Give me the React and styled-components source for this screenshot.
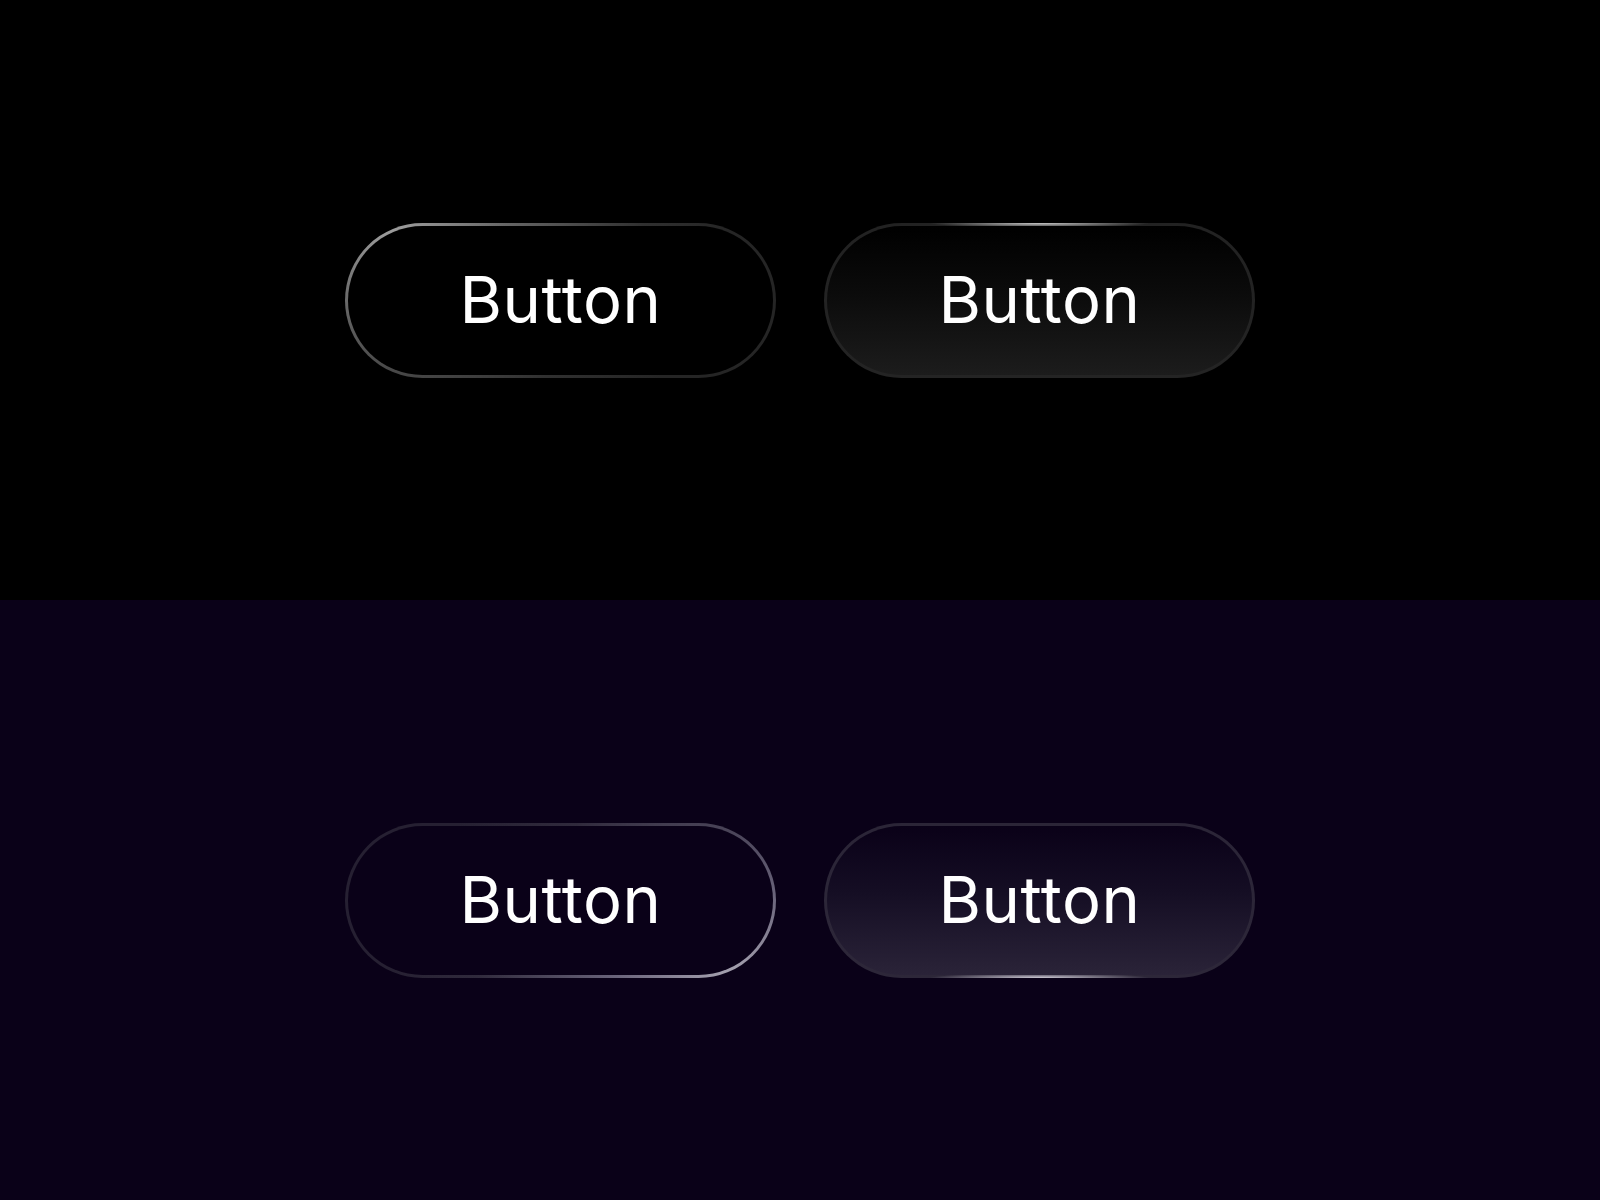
import React from "react";
import styled, { createGlobalStyle, css } from "styled-components";

const GlobalStyle = createGlobalStyle`
  html, body {
    margin: 0;
    padding: 0;
    background: #000;
  }
  * { box-sizing: border-box; }
`;

const Page = styled.main`
  display: flex;
  flex-direction: column;
  width: 1600px;
`;

const Section = styled.section`
  height: 600px;
  display: flex;
  align-items: center;
  justify-content: center;
  gap: 48px;
  background: ${(p) => p.$bg};
`;

const outlineBorder = {
  top: "radial-gradient(ellipse 340px 260px at 10% 0%, #a0a0a0 0%, #656565 35%, #303030 75%, #252525 100%)",
  bottom:
    "radial-gradient(ellipse 340px 260px at 90% 100%, #a8a4b2 0%, #69637a 35%, #302a3c 75%, #262032 100%)",
};

const Pill = styled.button`
  width: 431px;
  height: 155px;
  border-radius: 999px;
  border: 3px solid transparent;
  font-family: Inter, "Noto Sans", sans-serif;
  font-size: 65px;
  font-weight: 400;
  letter-spacing: 0.6px;
  color: #fff;
  display: flex;
  align-items: center;
  justify-content: center;
  padding: 0 0 2px;
  cursor: pointer;

  ${(p) =>
    p.$variant === "outline" &&
    css`
      background:
        linear-gradient(${p.$fill}, ${p.$fill}) padding-box,
        ${outlineBorder[p.$glow]} border-box;
    `}

  ${(p) =>
    p.$variant === "filled" &&
    p.$glow === "top" &&
    css`
      background:
        linear-gradient(180deg, #000 0%, #0b0b0b 45%, #1c1c1c 100%) padding-box,
        radial-gradient(ellipse 110px 5px at 50% 0%, #c8c8c8 0%, rgba(200, 200, 200, 0) 100%) border-box,
        linear-gradient(#222, #242424) border-box;
    `}

  ${(p) =>
    p.$variant === "filled" &&
    p.$glow === "bottom" &&
    css`
      background:
        linear-gradient(180deg, #0a0118 0%, #150e24 45%, #2a2338 100%) padding-box,
        radial-gradient(ellipse 110px 5px at 50% 100%, #d0ccd8 0%, rgba(208, 204, 216, 0) 100%) border-box,
        linear-gradient(#2b2537, #2d2739) border-box;
    `}
`;

export default function App() {
  return (
    <>
      <GlobalStyle />
      <Page>
        <Section $bg="#000">
          <Pill $variant="outline" $glow="top" $fill="#000">
            Button
          </Pill>
          <Pill $variant="filled" $glow="top">
            Button
          </Pill>
        </Section>
        <Section $bg="#0a0118">
          <Pill $variant="outline" $glow="bottom" $fill="#0a0118">
            Button
          </Pill>
          <Pill $variant="filled" $glow="bottom">
            Button
          </Pill>
        </Section>
      </Page>
    </>
  );
}
